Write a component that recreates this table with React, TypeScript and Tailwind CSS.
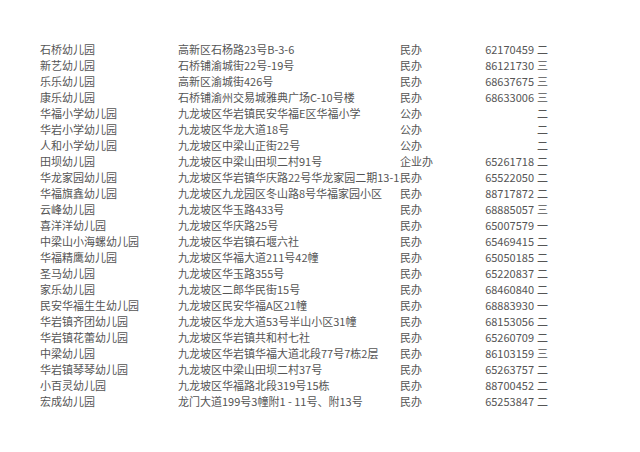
type Row = {
  name: string;
  address: string;
  type: string;
  phone: string;
  level: string;
};

const rows: Row[] = [
  { name: "石桥幼儿园", address: "高新区石杨路23号B-3-6", type: "民办", phone: "62170459", level: "二" },
  { name: "新艺幼儿园", address: "石桥铺渝城街22号-19号", type: "民办", phone: "86121730", level: "三" },
  { name: "乐乐幼儿园", address: "高新区渝城街426号", type: "民办", phone: "68637675", level: "三" },
  { name: "康乐幼儿园", address: "石桥铺渝州交易城雅典广场C-10号楼", type: "民办", phone: "68633006", level: "三" },
  { name: "华福小学幼儿园", address: "九龙坡区华岩镇民安华福E区华福小学", type: "公办", phone: "", level: "二" },
  { name: "华岩小学幼儿园", address: "九龙坡区华龙大道18号", type: "公办", phone: "", level: "二" },
  { name: "人和小学幼儿园", address: "九龙坡区中梁山正街22号", type: "公办", phone: "", level: "二" },
  { name: "田坝幼儿园", address: "九龙坡区中梁山田坝二村91号", type: "企业办", phone: "65261718", level: "二" },
  { name: "华龙家园幼儿园", address: "九龙坡区华岩镇华庆路22号华龙家园二期13-1-1", type: "民办", phone: "65522050", level: "二" },
  { name: "华福旗鑫幼儿园", address: "九龙坡区九龙园区冬山路8号华福家园小区", type: "民办", phone: "88717872", level: "二" },
  { name: "云峰幼儿园", address: "九龙坡区华玉路433号", type: "民办", phone: "68885057", level: "三" },
  { name: "喜洋洋幼儿园", address: "九龙坡区华庆路25号", type: "民办", phone: "65007579", level: "一" },
  { name: "中梁山小海螺幼儿园", address: "九龙坡区华岩镇石堰六社", type: "民办", phone: "65469415", level: "二" },
  { name: "华福精鹰幼儿园", address: "九龙坡区华福大道211号42幢", type: "民办", phone: "65050185", level: "二" },
  { name: "圣马幼儿园", address: "九龙坡区华玉路355号", type: "民办", phone: "65220837", level: "二" },
  { name: "家乐幼儿园", address: "九龙坡区二郎华民街15号", type: "民办", phone: "68460840", level: "二" },
  { name: "民安华福生生幼儿园", address: "九龙坡区民安华福A区21幢", type: "民办", phone: "68883930", level: "一" },
  { name: "华岩镇齐团幼儿园", address: "九龙坡区华龙大道53号半山小区31幢", type: "民办", phone: "68153056", level: "二" },
  { name: "华岩镇花蕾幼儿园", address: "九龙坡区华岩镇共和村七社", type: "民办", phone: "65260709", level: "二" },
  { name: "中梁幼儿园", address: "九龙坡区华岩镇华福大道北段77号7栋2层", type: "民办", phone: "86103159", level: "三" },
  { name: "华岩镇琴琴幼儿园", address: "九龙坡区中梁山田坝二村37号", type: "民办", phone: "65263757", level: "二" },
  { name: "小百灵幼儿园", address: "九龙坡区华福路北段319号15栋", type: "民办", phone: "88700452", level: "二" },
  { name: "宏成幼儿园", address: "龙门大道199号3幢附1 - 11号、附13号", type: "民办", phone: "65253847", level: "二" },
];

export default function App() {
  return (
    <div
      className="w-[640px] h-[452px] bg-white pt-[41px] pl-[40px] text-[11px] text-[#555555]"
      style={{ fontFamily: '"Noto Sans CJK SC", "Noto Sans", sans-serif' }}
    >
      {rows.map((r) => (
        <div key={r.name} className="flex h-[16px] items-center leading-[16px] whitespace-nowrap">
          <div className="w-[138px]">{r.name}</div>
          <div className="w-[222px] overflow-hidden">{r.address}</div>
          <div className="w-[60px]">{r.type}</div>
          <div className="w-[74px] text-right">{r.phone}</div>
          <div className="pl-[3px]">{r.level}</div>
        </div>
      ))}
    </div>
  );
}
